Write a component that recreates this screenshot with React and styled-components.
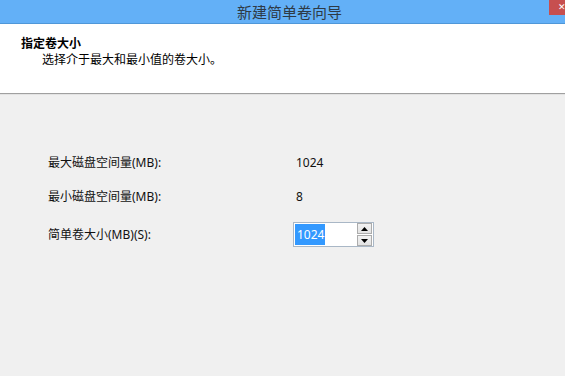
import React from "react";
import styled, { createGlobalStyle } from "styled-components";

const Global = createGlobalStyle`
  html, body { margin: 0; padding: 0; background: #f0f0f0; }
  body { font-family: "Noto Sans", "Noto Sans CJK SC", sans-serif; }
  #root { width: 565px; height: 376px; overflow: hidden; }
`;

const Window = styled.div`
  width: 565px;
  height: 376px;
  display: flex;
  flex-direction: column;
  background: #f0f0f0;
  font-family: "Noto Sans", "Noto Sans CJK SC", sans-serif;
  font-size: 12px;
  color: #000;
`;

const TitleBar = styled.div`
  position: relative;
  height: 23px;
  flex: none;
  background: #63b0f7;
  border-bottom: 1px solid #4f97d8;
  display: flex;
  align-items: center;
  justify-content: center;
  padding-left: 14px;
  overflow: hidden;
`;

const Title = styled.span`
  font-family: "Noto Sans CJK SC", sans-serif;
  font-size: 15px;
  line-height: 20px;
  color: #2e3a46;
`;

const CloseButton = styled.div`
  position: absolute;
  left: 549px;
  top: 0;
  width: 16px;
  height: 15px;
  background: #c74f4f;
  color: #fff;
  font-family: "DejaVu Sans", sans-serif;
  font-size: 9px;
  font-weight: bold;
  line-height: 15px;
  padding-left: 9px;
  box-sizing: border-box;
  overflow: hidden;
`;

const Header = styled.div`
  height: 70px;
  flex: none;
  background: #fff;
  border-bottom: 1px solid #a0a0a0;
  box-shadow: 0 1px 0 #e3e3e3;
  padding: 11px 0 0 21px;
  box-sizing: border-box;
`;

const HeaderTitle = styled.div`
  font-family: "Noto Sans CJK SC", sans-serif;
  font-weight: bold;
  font-size: 12px;
  line-height: 16px;
`;

const HeaderSub = styled.div`
  font-family: "Noto Sans CJK SC", sans-serif;
  font-size: 12px;
  line-height: 16px;
  padding-left: 21px;
`;

const Content = styled.div`
  flex: 1;
  padding: 57px 0 0 48px;
  display: flex;
  flex-direction: column;
`;

const Row = styled.div`
  display: grid;
  grid-template-columns: 245px auto;
  align-items: center;
  height: ${(p) => p.$h || 24}px;
  margin-top: ${(p) => p.$mt || 0}px;
`;

const Label = styled.span`
  font-family: "Noto Sans", "Noto Sans CJK SC", sans-serif;
  font-size: 12px;
  line-height: 16px;
  color: #111;
`;

const Value = styled.span`
  font-size: 12px;
  line-height: 16px;
  padding-left: 3px;
  color: #111;
`;

const Spin = styled.div`
  width: 81px;
  height: 25px;
  box-sizing: border-box;
  border: 1px solid #a9b7c6;
  background: #fff;
  display: flex;
  align-items: center;
  padding: 1px 0 1px 1px;
`;

const Selected = styled.span`
  background: #3399ff;
  color: #fff;
  font-size: 12px;
  line-height: 21px;
  height: 21px;
  padding: 0 1px 0 2px;
`;

const Fill = styled.span`
  flex: 1;
`;

const SpinButtons = styled.div`
  width: 15px;
  margin-right: 1px;
  display: flex;
  flex-direction: column;
  gap: 1px;
`;

const SpinBtn = styled.div`
  height: 9px;
  border: 1px solid #acacac;
  background: linear-gradient(#f2f2f2, #e3e3e3);
  display: flex;
  align-items: center;
  justify-content: center;
`;

const Arrow = ({ down }) => (
  <svg width="7" height="4" viewBox="0 0 7 4">
    {down ? <path d="M0 0h7L3.5 4z" fill="#000" /> : <path d="M0 4h7L3.5 0z" fill="#000" />}
  </svg>
);

export default function App() {
  return (
    <>
      <Global />
      <Window>
        <TitleBar>
          <Title>新建简单卷向导</Title>
          <CloseButton>✕</CloseButton>
        </TitleBar>
        <Header>
          <HeaderTitle>指定卷大小</HeaderTitle>
          <HeaderSub>选择介于最大和最小值的卷大小。</HeaderSub>
        </Header>
        <Content>
          <Row>
            <Label>最大磁盘空间量(MB):</Label>
            <Value>1024</Value>
          </Row>
          <Row $mt={10}>
            <Label>最小磁盘空间量(MB):</Label>
            <Value>8</Value>
          </Row>
          <Row $mt={13} $h={25}>
            <Label>简单卷大小(MB)(S):</Label>
            <Spin>
              <Selected>1024</Selected>
              <Fill />
              <SpinButtons>
                <SpinBtn><Arrow /></SpinBtn>
                <SpinBtn><Arrow down /></SpinBtn>
              </SpinButtons>
            </Spin>
          </Row>
        </Content>
      </Window>
    </>
  );
}
